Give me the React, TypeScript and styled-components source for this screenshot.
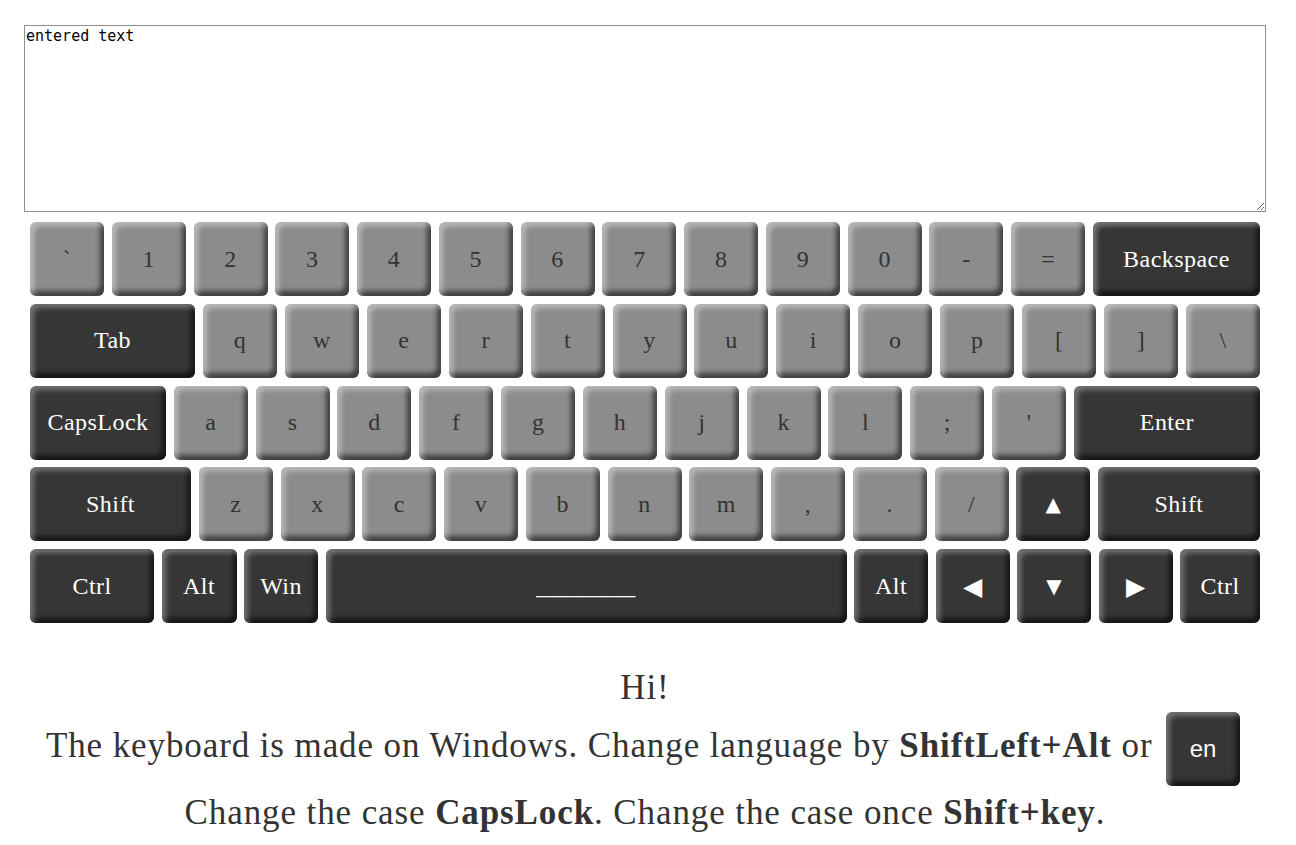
import React from "react";
import styled, { createGlobalStyle, css } from "styled-components";

const GlobalStyle = createGlobalStyle`
  html, body { margin: 0; padding: 0; background: #fff; }
  body { font-family: "Liberation Serif", "Times New Roman", serif; color: #333; }
`;

const Page = styled.div`
  width: 1242px;
  margin-left: 24px;
  padding-top: 25px;
`;

const TextArea = styled.textarea`
  display: block;
  box-sizing: border-box;
  width: 1242px;
  height: 187px;
  margin: 0;
  padding: 2px 1px;
  border: 1px solid #8f8f8f;
  font-family: "DejaVu Sans Mono", "Liberation Mono", monospace;
  font-size: 15px;
  line-height: 17px;
  color: #000;
  resize: both;
`;

const Keyboard = styled.div`
  margin-top: 10px;
  padding: 0 6px;
  display: flex;
  flex-direction: column;
  gap: 7.8px;
`;

const Row = styled.div`
  display: flex;
  justify-content: space-between;
  height: 74px;
`;

const Key = styled.div<{ $w?: number; $dark?: boolean }>`
  flex: 0 0 ${(p) => p.$w ?? 74}px;
  height: 74px;
  box-sizing: border-box;
  border-radius: 6px;
  display: flex;
  align-items: center;
  justify-content: center;
  font-family: "Liberation Serif", "Times New Roman", serif;
  font-size: 24px;
  letter-spacing: 0.45px;
  user-select: none;
  ${(p) =>
    p.$dark
      ? css`
          background: #363636;
          color: #fff;
          box-shadow: inset 4px 4px 5px rgba(255, 255, 255, 0.3),
            inset -4px -5px 5px rgba(0, 0, 0, 0.6);
        `
      : css`
          background: #8c8c8c;
          color: #333;
          box-shadow: inset 4px 4px 5px rgba(255, 255, 255, 0.38),
            inset -4px -5px 5px rgba(0, 0, 0, 0.55);
        `}
`;

const Arrow = styled.span<{ $size: number }>`
  font-family: "DejaVu Sans", sans-serif;
  font-size: ${(p) => p.$size}px;
  line-height: 1;
  color: #fff;
  letter-spacing: 0;
`;

const Info = styled.div`
  margin-top: 45px;
  text-align: center;
  font-size: 35px;
  letter-spacing: 0.9px;
  color: #333;
`;

const Line = styled.div`
  line-height: normal;
`;

const LangButton = styled.button`
  display: inline-block;
  vertical-align: baseline;
  width: 74px;
  height: 74px;
  margin: 4px 4px 7px 4px;
  padding: 0;
  border: none;
  border-radius: 6px;
  background: #363636;
  color: #fff;
  font-family: "Liberation Sans", Arial, sans-serif;
  font-size: 24px;
  letter-spacing: 0;
  box-shadow: inset 4px 4px 5px rgba(255, 255, 255, 0.3),
    inset -4px -5px 5px rgba(0, 0, 0, 0.6);
`;

type K = { l: React.ReactNode; w?: number; d?: boolean };

const rows: K[][] = [
  [
    ..."`1234567890-=".split("").map((c) => ({ l: c })),
    { l: "Backspace", w: 167, d: true },
  ],
  [
    { l: "Tab", w: 165, d: true },
    ..."qwertyuiop[]\\".split("").map((c) => ({ l: c })),
  ],
  [
    { l: "CapsLock", w: 136, d: true },
    ..."asdfghjkl;'".split("").map((c) => ({ l: c })),
    { l: "Enter", w: 186, d: true },
  ],
  [
    { l: "Shift", w: 161, d: true },
    ..."zxcvbnm,./".split("").map((c) => ({ l: c })),
    { l: <Arrow $size={20}>▲</Arrow>, d: true },
    { l: "Shift", w: 162, d: true },
  ],
  [
    { l: "Ctrl", w: 124, d: true },
    { l: "Alt", w: 75, d: true },
    { l: "Win", d: true },
    { l: "________", w: 521, d: true },
    { l: "Alt", d: true },
    { l: <Arrow $size={25}>◀</Arrow>, d: true },
    { l: <Arrow $size={20}>▼</Arrow>, d: true },
    { l: <Arrow $size={25}>▶</Arrow>, d: true },
    { l: "Ctrl", w: 80, d: true },
  ],
];

export default function App() {
  return (
    <>
      <GlobalStyle />
      <Page>
        <TextArea defaultValue="entered text" />
        <Keyboard>
          {rows.map((r, i) => (
            <Row key={i}>
              {r.map((k, j) => (
                <Key key={j} $w={k.w} $dark={k.d}>
                  {k.l}
                </Key>
              ))}
            </Row>
          ))}
        </Keyboard>
        <Info>
          <Line>Hi!</Line>
          <Line>
            The keyboard is made on Windows. Change language by{" "}
            <b>ShiftLeft+Alt</b> or <LangButton>en</LangButton>
          </Line>
          <Line>
            Change the case <b>CapsLock</b>. Change the case once{" "}
            <b>Shift+key</b>.
          </Line>
        </Info>
      </Page>
    </>
  );
}
